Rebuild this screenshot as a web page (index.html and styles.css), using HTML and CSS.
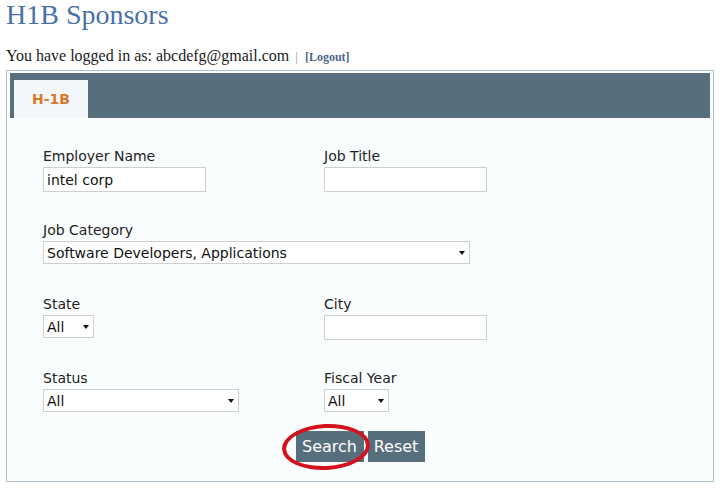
FILE: index.html
```html
<!DOCTYPE html>
<html>
<head>
<meta charset="utf-8">
<link rel="stylesheet" href="styles.css">
</head>
<body>
<h1 class="title">H1B Sponsors</h1>
<div class="login">You have logged in as: abcdefg@gmail.com <span class="sep">|</span> <a class="logout" href="#">[Logout]</a></div>
<div class="frame">
  <div class="band"><div class="tab">H-1B</div></div>
  <form class="form">
    <div class="row">
      <div class="field"><label>Employer Name</label><input class="txt" type="text" value="intel corp"></div>
      <div class="field"><label>Job Title</label><input class="txt" type="text"></div>
    </div>
    <div class="row">
      <div class="field wide"><label>Job Category</label><span class="sel sel-cat"><select><option>Software Developers, Applications</option></select></span></div>
    </div>
    <div class="row">
      <div class="field"><label>State</label><span class="sel sel-state"><select><option>All</option></select></span></div>
      <div class="field"><label>City</label><input class="txt" type="text"></div>
    </div>
    <div class="row">
      <div class="field"><label>Status</label><span class="sel sel-status"><select><option>All</option></select></span></div>
      <div class="field"><label>Fiscal Year</label><span class="sel sel-year"><select><option>All</option></select></span></div>
    </div>
    <div class="buttons">
      <span class="btnwrap"><button type="button" class="btn btn-search">Search</button><span class="circle"></span></span>
      <button type="button" class="btn btn-reset">Reset</button>
    </div>
  </form>
</div>
</body>
</html>
```

FILE: styles.css
```css
html, body {
  margin: 0;
  padding: 0;
  background: #ffffff;
}
.title {
  margin: 0;
  padding-left: 6px;
  font-family: "Liberation Serif", serif;
  font-weight: normal;
  font-size: 28px;
  line-height: 30px;
  color: #4a70a8;
}
.login {
  margin: 16px 0 3px 0;
  padding-left: 6px;
  font-family: "Liberation Serif", serif;
  font-size: 16px;
  line-height: 20px;
  color: #1a1a1a;
}
.sep {
  color: #9a9a9a;
  font-size: 13px;
  margin: 0 3px 0 2px;
}
.logout {
  font-family: "Liberation Serif", serif;
  font-size: 12px;
  font-weight: bold;
  color: #4e6886;
  text-decoration: none;
}
.frame {
  margin: 0 8px 0 6px;
  border: 1px solid #b2c2ca;
  background: #fafdfd;
  padding: 2px 3px 19px 3px;
}
.band {
  background: #576e7c;
  height: 45px;
  box-sizing: border-box;
  padding: 7px 0 0 4px;
}
.tab {
  width: 74px;
  height: 38px;
  background: #f4f7f9;
  text-align: center;
  font-family: "DejaVu Sans", sans-serif;
  font-weight: bold;
  font-size: 14px;
  line-height: 38px;
  color: #d8782a;
}
.form {
  margin: 0;
  padding: 29px 0 0 0;
  font-family: "DejaVu Sans", sans-serif;
}
.row {
  display: grid;
  grid-template-columns: 281px 200px;
  height: 45px;
  margin: 0 0 29px 33px;
}
.row:nth-child(4) {
  margin-bottom: 0;
}
.field.wide {
  grid-column: 1 / 3;
}
.field label {
  display: block;
  font-size: 14px;
  line-height: 18px;
  color: #222222;
  margin-bottom: 2px;
}
.txt {
  display: block;
  box-sizing: border-box;
  width: 163px;
  height: 25px;
  margin: 0;
  padding: 0 3px;
  border: 1px solid #cfcfcf;
  background: #ffffff;
  font-family: "DejaVu Sans", sans-serif;
  font-size: 14px;
  color: #111111;
  outline: none;
}
.sel {
  position: relative;
  display: block;
  height: 23px;
}
.sel select {
  -webkit-appearance: none;
  appearance: none;
  display: block;
  box-sizing: border-box;
  width: 100%;
  height: 23px;
  margin: 0;
  padding: 0 3px;
  border: 1px solid #cfcfcf;
  border-radius: 0;
  background: #ffffff;
  font-family: "DejaVu Sans", sans-serif;
  font-size: 14px;
  color: #111111;
  outline: none;
}
.sel::after {
  content: "";
  position: absolute;
  right: 5px;
  top: 10px;
  border-left: 3.5px solid transparent;
  border-right: 3.5px solid transparent;
  border-top: 4px solid #111111;
}
.sel-cat { width: 427px; }
.sel-state { width: 51px; }
.sel-status { width: 196px; }
.sel-year { width: 65px; }
.buttons {
  display: flex;
  justify-content: center;
  gap: 4px;
  margin-top: 17px;
}
.btnwrap {
  position: relative;
  display: block;
}
.btn {
  display: block;
  height: 31px;
  margin: 0;
  padding: 0 5px;
  border: none;
  background: #576e7c;
  color: #ffffff;
  font-family: "DejaVu Sans", sans-serif;
  font-size: 16px;
  line-height: 31px;
}
.btn-search { width: 68px; }
.btn-reset { width: 57px; }
.circle {
  position: absolute;
  left: -14px;
  top: -7px;
  width: 88px;
  height: 46px;
  box-sizing: border-box;
  border: 4px solid #d3121d;
  border-radius: 50%;
  transform: rotate(-3deg);
}
```
